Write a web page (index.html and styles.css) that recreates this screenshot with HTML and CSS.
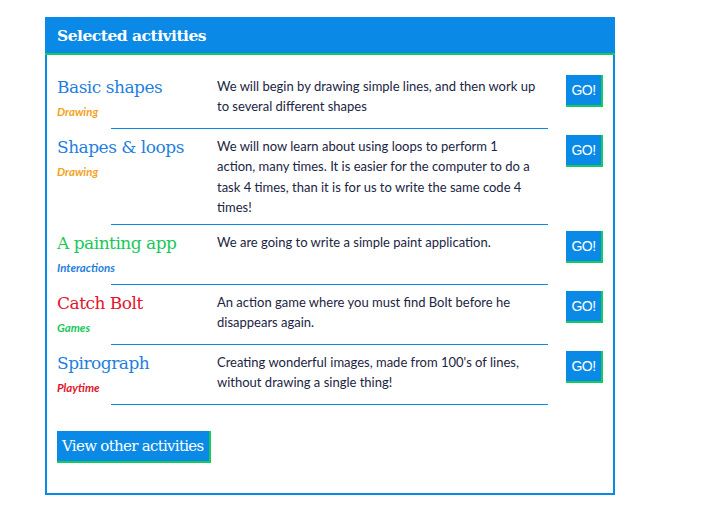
FILE: index.html
```html
<!DOCTYPE html>
<html lang="en">
<head>
<meta charset="utf-8">
<title>Selected activities</title>
<link rel="stylesheet" href="styles.css">
</head>
<body>
<section class="card">
  <header class="card-header">
    <h2 class="card-title">Selected activities</h2>
  </header>
  <div class="activities">
    <div class="activity">
      <div class="activity-name">
        <h3 class="title title-blue">Basic shapes</h3>
        <p class="category cat-orange">Drawing</p>
      </div>
      <p class="desc">We will begin by drawing simple lines, and then work up to several different shapes</p>
      <a class="go-btn" href="#">GO!</a>
    </div>
    <hr class="divider">
    <div class="activity">
      <div class="activity-name">
        <h3 class="title title-blue">Shapes &amp; loops</h3>
        <p class="category cat-orange">Drawing</p>
      </div>
      <p class="desc">We will now learn about using loops to perform 1 action, many times. It is easier for the computer to do a task 4 times, than it is for us to write the same code 4 times!</p>
      <a class="go-btn" href="#">GO!</a>
    </div>
    <hr class="divider">
    <div class="activity">
      <div class="activity-name">
        <h3 class="title title-green">A painting app</h3>
        <p class="category cat-blue">Interactions</p>
      </div>
      <p class="desc">We are going to write a simple paint application.</p>
      <a class="go-btn" href="#">GO!</a>
    </div>
    <hr class="divider">
    <div class="activity">
      <div class="activity-name">
        <h3 class="title title-red">Catch Bolt</h3>
        <p class="category cat-green">Games</p>
      </div>
      <p class="desc">An action game where you must find Bolt before he disappears again.</p>
      <a class="go-btn" href="#">GO!</a>
    </div>
    <hr class="divider">
    <div class="activity">
      <div class="activity-name">
        <h3 class="title title-blue">Spirograph</h3>
        <p class="category cat-red">Playtime</p>
      </div>
      <p class="desc">Creating wonderful images, made from 100's of lines, without drawing a single thing!</p>
      <a class="go-btn" href="#">GO!</a>
    </div>
    <hr class="divider">
  </div>
  <div class="card-footer">
    <a class="more-btn" href="#">View other activities</a>
  </div>
</section>
</body>
</html>
```
FILE: styles.css
```css
* { box-sizing: border-box; }

body {
  margin: 0;
  padding: 17px 0 0 45px;
  background: #ffffff;
  font-family: "Lato", "Open Sans", sans-serif;
}

.card {
  width: 570px;
  height: 478px;
  border: 2px solid #0a89e6;
  display: flex;
  flex-direction: column;
}

.card-header {
  background: #0a89e6;
  border-bottom: 2px solid #13cc5b;
  height: 38px;
  margin: -2px -2px 0 -2px;
  padding: 0 12px;
  display: flex;
  align-items: center;
}

.card-title {
  margin: 0;
  color: #ffffff;
  font-family: "DejaVu Serif", serif;
  font-weight: bold;
  font-size: 15.5px;
  letter-spacing: -0.5px;
}

.activities {
  padding: 14px 10px 0 10px;
}

.activity {
  display: grid;
  grid-template-columns: 160px 1fr 37px;
  padding: 6px 0 6px 0;
  align-items: start;
}

.activity-name {
  display: flex;
  flex-direction: column;
}

.title {
  margin: 0;
  font-family: "DejaVu Serif", serif;
  font-weight: normal;
  font-size: 17px;
  line-height: 24px;
  letter-spacing: -0.5px;
}

.title-blue { color: #1f7fde; }
.title-green { color: #19c85a; }
.title-red { color: #e0172c; }

.category {
  margin: 4px 0 1px 0;
  font-size: 11.5px;
  line-height: 18px;
  font-style: italic;
  font-weight: bold;
}

.cat-orange { color: #f5a21c; }
.cat-blue { color: #1f7fde; }
.cat-green { color: #19c85a; }
.cat-red { color: #e0172c; }

.desc {
  margin: 0;
  padding: 1px 28.5px 0 0;
  color: #1b2542;
  font-size: 13px;
  line-height: 20.4px;
}

.go-btn {
  display: flex;
  align-items: center;
  justify-content: center;
  width: 37px;
  height: 32px;
  background: #0a89e6;
  border-right: 2px solid #13cc5b;
  border-bottom: 2px solid #13cc5b;
  color: #ffffff;
  text-decoration: none;
  font-family: "Liberation Sans", Arial, sans-serif;
  font-size: 14px;
  letter-spacing: -0.5px;
}

.divider {
  margin: 0 55px 0 54px;
  border: 0;
  height: 1px;
  background: #0a89e6;
}

.card-footer {
  padding: 26px 10px 0 10px;
  display: flex;
}

.more-btn {
  display: flex;
  align-items: center;
  height: 32px;
  padding: 0 5px 0 5px;
  background: #0a89e6;
  border-right: 2px solid #13cc5b;
  border-bottom: 2px solid #13cc5b;
  color: #ffffff;
  text-decoration: none;
  font-family: "DejaVu Serif", serif;
  font-size: 15px;
  letter-spacing: -0.7px;
}
```
